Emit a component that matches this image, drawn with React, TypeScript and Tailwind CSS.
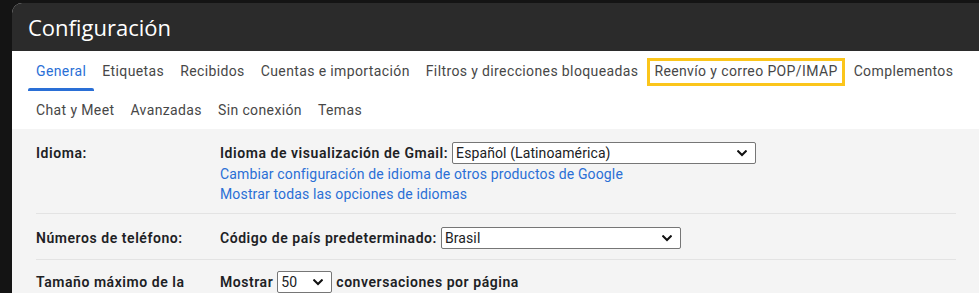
import React from "react";

const Chevron = () => (
  <svg width="10" height="7" viewBox="0 0 10 7" className="shrink-0">
    <path d="M1.2 1.2 L5 5 L8.8 1.2" fill="none" stroke="#111" strokeWidth="2" strokeLinecap="square" />
  </svg>
);

const Select = ({ value, w }: { value: string; w: string }) => (
  <div
    className={`${w} h-[22px] bg-white border border-[#767676] rounded-[2px] flex items-center justify-between pl-[3px] pr-[8px] font-normal tracking-[0.1px] text-[#202124]`}
  >
    <span>{value}</span>
    <Chevron />
  </div>
);

export default function App() {
  const row1 = ["General", "Etiquetas", "Recibidos", "Cuentas e importación", "Filtros y direcciones bloqueadas", "Reenvío y correo POP/IMAP", "Complementos"];
  const row2 = ["Chat y Meet", "Avanzadas", "Sin conexión", "Temas"];
  return (
    <div className="w-[979px] h-[293px] bg-[#141414] pt-[3px] pl-[12px] overflow-hidden" style={{ fontFamily: "Roboto, 'Liberation Sans', sans-serif" }}>
      <div className="h-full rounded-tl-[10px] overflow-hidden bg-[#f4f4f4]">
        <div className="h-[48px] bg-[#2b2b2b] flex items-center pl-[16px] text-white text-[22px] pt-[1px]" style={{ fontFamily: "'Open Sans', Roboto, sans-serif" }}>
          Configuración
        </div>
        <div className="bg-white pl-[16px] text-[14px] text-[#474747] tracking-[0.38px]">
          <div className="flex h-[40px]">
            {row1.map((t, i) => (
              <div key={t} className="relative px-2 flex items-center">
                <span className={i === 0 ? "text-[#2a6fd6]" : ""}>{t}</span>
                {i === 0 && <div className="absolute left-0 right-0 bottom-0 h-[3px] bg-[#2a6fd6] rounded-t-[2px]" />}
                {i === 5 && <div className="absolute left-[1px] right-[1px] top-[7px] bottom-[5px] border-[3px] border-[#fbc51b]" />}
              </div>
            ))}
          </div>
          <div className="flex h-[38px]">
            {row2.map((t) => (
              <div key={t} className="px-2 flex items-center">
                {t}
              </div>
            ))}
          </div>
        </div>
        <div className="pl-[24px] pr-[23px] text-[14px] text-[#202124] tracking-[0.15px]">
          <div className="flex pt-[13px] pb-[9px] border-b border-[#e3e3e3]">
            <div className="w-[184px] font-semibold tracking-[0.55px] leading-[22px]">Idioma:</div>
            <div className="flex flex-col">
              <div className="flex items-center gap-[4px] leading-[22px]">
                <span className="font-semibold tracking-[0.55px]">Idioma de visualización de Gmail:</span>
                <Select value="Español (Latinoamérica)" w="w-[304px]" />
              </div>
              <span className="text-[#2a6fd6] leading-[20px]">Cambiar configuración de idioma de otros productos de Google</span>
              <span className="text-[#2a6fd6] leading-[20px]">Mostrar todas las opciones de idiomas</span>
            </div>
          </div>
          <div className="flex pt-[13px] pb-[10px] border-b border-[#e3e3e3]">
            <div className="w-[184px] font-semibold tracking-[0.55px] leading-[22px]">Números de teléfono:</div>
            <div className="flex items-center gap-[4px] leading-[22px]">
              <span className="font-semibold tracking-[0.55px]">Código de país predeterminado:</span>
              <Select value="Brasil" w="w-[240px]" />
            </div>
          </div>
          <div className="flex pt-[11px] pb-[10px]">
            <div className="w-[184px] font-semibold tracking-[0.55px] leading-[22px]">Tamaño máximo de la</div>
            <div className="flex items-center gap-[4px] leading-[22px] font-semibold tracking-[0.55px]">
              <span>Mostrar</span>
              <Select value="50" w="w-[55px]" />
              <span>conversaciones por página</span>
            </div>
          </div>
        </div>
      </div>
    </div>
  );
}
